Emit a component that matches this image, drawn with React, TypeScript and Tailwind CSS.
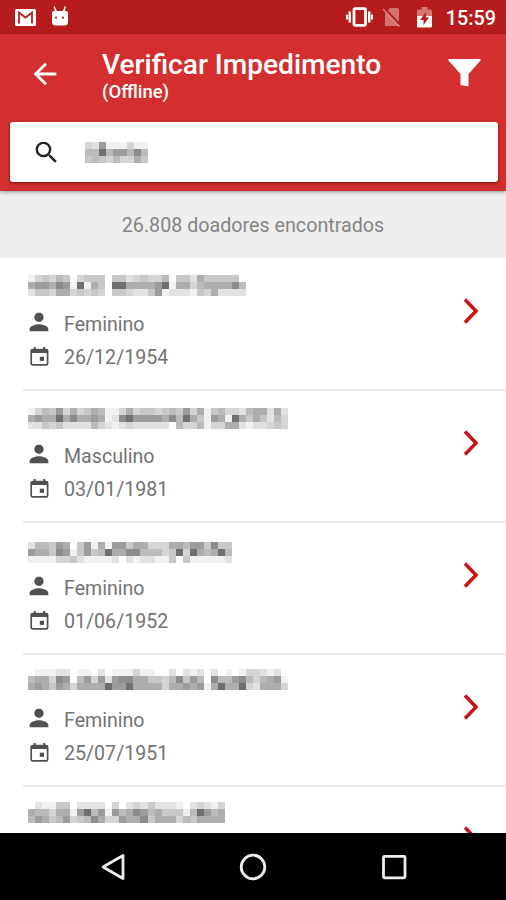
import { MdArrowBack, MdPerson, MdSearch } from "react-icons/md";

// One digit per mosaic cell, from 0 (blank) to 9 (darkest)
type Mosaic = string[];

interface Donor {
  name: Mosaic;
  nameOffset: number;
  gender?: string;
  birthDate?: string;
}

const SHADES = [
  "#ffffff",
  "#f1f1f1",
  "#e2e2e2",
  "#d5d5d5",
  "#c8c8c8",
  "#bbbbbb",
  "#adadad",
  "#9c9c9c",
  "#8c8c8c",
  "#6f6f6f",
];

const QUERY: Mosaic = ["327111311", "559577585", "454353364"];

const DONORS: Donor[] = [
  {
    name: [
      "1343540344404423433504426444440",
      "6776871916409966667916635666685",
      "2443663434304432247122214362222",
    ],
    nameOffset: 17,
    gender: "Feminino",
    birthDate: "26/12/1954",
  },
  {
    name: [
      "1354736346511363443454736145332566262",
      "6766968667612897777685964176196464253",
      "2243422225321232222205335133662122343",
    ],
    nameOffset: 18,
    gender: "Masculino",
    birthDate: "03/01/1981",
  },
  {
    name: [
      "25547604716177466333665774844",
      "76648714745966885553493965695",
      "11113342111120212211404111112",
    ],
    nameOffset: 20,
    gender: "Feminino",
    birthDate: "01/06/1952",
  },
  {
    name: [
      "0111220110201113110020212020101332120",
      "5663870573727886644358475085578535671",
      "6764763666697796666366767169669326663",
    ],
    nameOffset: 15,
    gender: "Feminino",
    birthDate: "25/07/1951",
  },
  {
    name: [
      "0211440222203023242221023213",
      "6553661795717568756444159756",
      "5764573458633766846663546666",
    ],
    nameOffset: 16,
  },
];

function MosaicText({ rows }: { rows: Mosaic }) {
  const columns = rows[0].length;
  return (
    <svg
      width={columns * 7.03}
      height={21}
      viewBox={`0 0 ${columns * 7.03} 21`}
      shapeRendering="crispEdges"
      className="block shrink-0"
    >
      {rows.map((row, y) =>
        row.split("").map((shade, x) => (
          <rect
            key={`${x}-${y}`}
            x={x * 7.03}
            y={y * 7}
            width={7.03}
            height={7}
            fill={SHADES[Number(shade)]}
          />
        ))
      )}
    </svg>
  );
}

function CalendarIcon() {
  return (
    <svg width="19" height="19" viewBox="0 0 19 19" className="block text-[#505050]">
      <rect x="1.2" y="2.7" width="16.4" height="15.1" rx="1.4" fill="none" stroke="currentColor" strokeWidth="1.7" />
      <path d="M1 2.5h17v3.6H1zM3.7 0h2v3h-2zM13.2 0h2v3h-2z" fill="currentColor" />
      <path d="M9.8 9.7h4.2v4.2H9.8z" fill="currentColor" />
    </svg>
  );
}

function StatusBar() {
  return (
    <div className="flex h-[34px] shrink-0 items-center bg-[#b71c1c] text-white">
      {/* Notifications */}
      <svg width="21" height="17" viewBox="0 0 21 17" className="ml-[15px]">
        <rect width="21" height="17" rx="1.5" fill="#fff" />
        <path d="M4 14.5V3.500l6.500 5 6.500-5v11" fill="none" stroke="#b71c1c" strokeWidth="1.8" />
      </svg>
      <svg width="18" height="20" viewBox="0 0 18 20" className="mb-[3px] ml-[15px]">
        <path
          d="M1 6.500Q1 5 2.600 5H4L2.500.8 3.700.3 5.800 5h6L13.800.3l1.200.5L13.700 5h1.800Q17 5 17 6.500V16q0 3.500-3.500 3.500h-9Q1 19.500 1 16z"
          fill="#fff"
        />
        <circle cx="5" cy="11.700" r="1.100" fill="#b71c1c" />
        <circle cx="12" cy="11.700" r="1.100" fill="#b71c1c" />
      </svg>

      {/* System icons */}
      <svg width="27" height="20" viewBox="0 0 27 20" className="ml-auto">
        <path d="M0 7.500h2v5H0zM2.500 4.500H5v11H2.500zM22 4.500h2.500v11H22zM25 7.500h2v5h-2z" fill="#fff" />
        <rect x="8" y="1.700" width="11.500" height="16.600" rx="1" fill="none" stroke="#fff" strokeWidth="2.800" />
      </svg>
      <svg width="19" height="20" viewBox="0 0 19 20" className="ml-[9px]">
        <path d="M3 6.500V19h14V2.500Q17 1 15.500 1H8L3 6.500" fill="#fff" fillOpacity=".38" />
        <path d="M1 .5l17 18" stroke="#b71c1c" strokeWidth="3" />
        <path d="M1 2l16.500 17.500" stroke="#fff" strokeOpacity=".45" strokeWidth="1.500" />
      </svg>
      <svg width="15" height="21" viewBox="0 0 15 21" className="ml-[16px]">
        <path d="M0 4q0-1.500 1.500-1.500H4.500V0h6v2.500h3Q15 2.500 15 4v5H0z" fill="#fff" fillOpacity=".4" />
        <path d="M0 9h15v10q0 1.500-1.500 1.500h-12Q0 20.500 0 19z" fill="#fff" />
        <path d="M8.800 5L3.200 13h3.300v5L12 10.500H8.800z" fill="#b71c1c" />
      </svg>
      <span className="mr-[10px] ml-[14px] pt-[3px] text-[19.800px] leading-none font-medium">15:59</span>
    </div>
  );
}

function AppBar() {
  return (
    <header className="z-10 flex h-[157px] shrink-0 flex-col bg-[#d32f2f] text-white shadow-[0_1px_4px_rgba(0,0,0,0.4)]">
      <div className="flex h-[88px] items-start">
        <MdArrowBack className="mt-[23px] ml-[28px] size-[34px]" />
        <div className="ml-[40px] flex flex-col pt-[14px] whitespace-nowrap">
          <h1 className="text-[28.100px] leading-[33px] font-medium">Verificar Impedimento</h1>
          <span className="text-[18.500px] leading-[22px] font-medium">(Offline)</span>
        </div>
        <svg width="33" height="28" viewBox="0 0 33 28" className="mt-[25px] mr-[25px] ml-auto">
          <path d="M.5 0h32v1.500L20.500 15v12.500L12.500 26V15L.5 1.500z" fill="#fff" />
        </svg>
      </div>

      {/* Search box */}
      <div className="mr-[8px] ml-[10px] flex h-[60px] items-center rounded-[3px] bg-white shadow-[0_1px_3px_rgba(110,0,0,0.9)]">
        <MdSearch className="ml-[22px] size-[29px] text-[#222]" />
        <div className="ml-[24px]">
          <MosaicText rows={QUERY} />
        </div>
      </div>
    </header>
  );
}

function DonorRow({ donor }: { donor: Donor }) {
  return (
    <li className="ml-[23px] flex h-[132px] shrink-0 border-b-2 border-[#e8e8e8] text-[19.600px] text-[#737373]">
      <div className="flex flex-1 flex-col pl-[5px]">
        <div className="h-[49px] shrink-0" style={{ paddingTop: donor.nameOffset - 1 }}>
          <MosaicText rows={donor.name} />
        </div>
        {donor.gender && (
          <div className="flex h-[33px] items-center">
            <MdPerson className="-ml-[3px] mb-[6px] size-[28px] text-[#505050]" />
            <span className="ml-[11px]">{donor.gender}</span>
          </div>
        )}
        {donor.birthDate && (
          <div className="flex h-[34px] items-center">
            <div className="mb-[4px] ml-[2px]">
              <CalendarIcon />
            </div>
            <span className="ml-[15px]">{donor.birthDate}</span>
          </div>
        )}
      </div>
      <svg width="18" height="28" viewBox="0 0 18 28" className="mt-[38px] mr-[26px]">
        <path d="M3 2.500L14 14 3 25.500" fill="none" stroke="#c91414" strokeWidth="3.500" />
      </svg>
    </li>
  );
}

function NavigationBar() {
  return (
    <nav className="flex h-[67px] shrink-0 items-center justify-between bg-black pr-[98px] pl-[100px]">
      <svg width="26" height="28" viewBox="0 0 26 28" fill="none" stroke="#eee" strokeWidth="2.800">
        <path d="M23 2.500v23L3 14z" strokeLinejoin="round" />
      </svg>
      <svg width="28" height="28" viewBox="0 0 28 28" fill="none" stroke="#eee" strokeWidth="2.800">
        <circle cx="14" cy="14" r="11.800" />
      </svg>
      <svg width="28" height="28" viewBox="0 0 28 28" fill="none" stroke="#eee" strokeWidth="2.800">
        <rect x="3.500" y="3.300" width="21.500" height="21.500" rx="1" />
      </svg>
    </nav>
  );
}

export default function App() {
  return (
    <div className="flex h-[900px] w-[506px] flex-col overflow-hidden bg-white font-[Roboto,sans-serif]">
      <StatusBar />
      <AppBar />
      <div className="flex h-[67px] shrink-0 items-center justify-center bg-[#efefef] pt-[3px] text-[19.700px] text-[#858585]">
        26.808 doadores encontrados
      </div>
      <ul className="flex min-h-0 flex-1 flex-col overflow-hidden pt-px">
        {DONORS.map((donor, index) => (
          <DonorRow key={index} donor={donor} />
        ))}
      </ul>
      <NavigationBar />
    </div>
  );
}
